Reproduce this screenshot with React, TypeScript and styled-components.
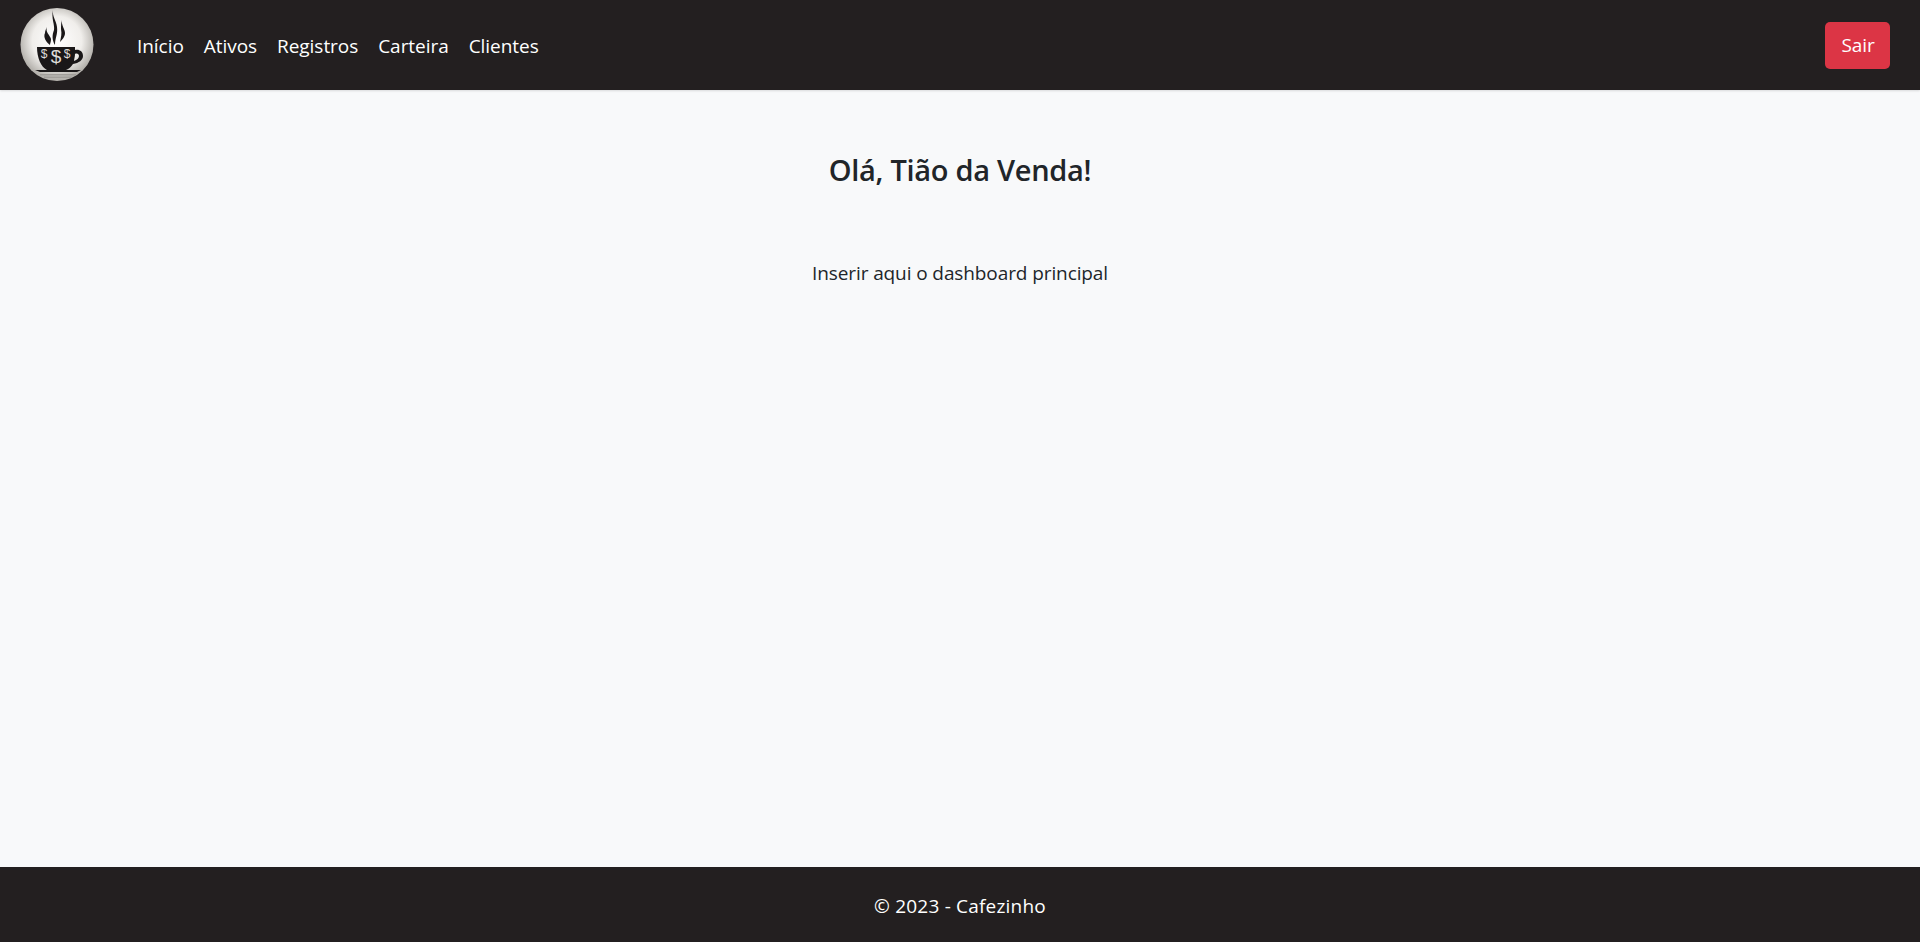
import styled, { createGlobalStyle } from "styled-components";

const GlobalStyle = createGlobalStyle`
  html, body {
    margin: 0;
    padding: 0;
    height: 100%;
  }
  body {
    font-family: "Open Sans", "Noto Sans", sans-serif;
    background: #f8f9fa;
    color: #212529;
  }
  #root {
    min-height: 100%;
  }
`

const Page = styled.div`
  display: flex;
  flex-direction: column;
  height: 942px;
`

const Header = styled.header`
  display: flex;
  align-items: center;
  justify-content: space-between;
  height: 90px;
  padding: 0 30px 0 20px;
  background: #231f20;
  box-shadow: 0 1px 2px rgba(0, 0, 0, 0.12);
`

const LeftSide = styled.div`
  display: flex;
  align-items: center;
  gap: 43px;
`

const Nav = styled.nav`
  display: flex;
  align-items: center;
  gap: 20px;
  padding-top: 1px;
`

const NavLink = styled.a`
  font-size: 19px;
  letter-spacing: -0.05px;
  color: #fff;
  text-decoration: none;
`

const LogoutButton = styled.button`
  width: 65px;
  height: 47px;
  padding: 0 0 0 1px;
  border: none;
  border-radius: 5px;
  background: #dc3545;
  color: #fff;
  font-family: inherit;
  font-size: 19px;
  letter-spacing: -0.12px;
`

const Main = styled.main`
  flex: 1;
  display: flex;
  flex-direction: column;
  align-items: center;
`

const Title = styled.h1`
  margin: 61px 0 0;
  font-size: 29px;
  line-height: 38px;
  font-weight: 600;
  letter-spacing: -0.3px;
`

const Subtitle = styled.p`
  margin: 70px 0 0;
  font-size: 19px;
  line-height: 28px;
  letter-spacing: -0.1px;
`

const Footer = styled.footer`
  display: flex;
  align-items: center;
  justify-content: center;
  height: 75px;
  padding-top: 2px;
  box-sizing: border-box;
  background: #231f20;
  color: #fff;
  font-size: 19px;
  letter-spacing: 0.2px;
`

function DollarSign({ x, y, size }: { x: number; y: number; size: number }) {
  return (
    <text
      x={x}
      y={y}
      fontSize={size}
      fontWeight="400"
      fontFamily="Liberation Sans, sans-serif"
      fill="#dedcd9"
      textAnchor="middle"
    >
      $
    </text>
  );
}

function Logo() {
  return (
    <svg width="74" height="74" viewBox="0 0 74 74" aria-hidden="true">
      <defs>
        <radialGradient id="logoBg" cx="50%" cy="45%" r="52%">
          <stop offset="0%" stopColor="#ffffff" />
          <stop offset="65%" stopColor="#f0eeeb" />
          <stop offset="100%" stopColor="#b5b2ad" />
        </radialGradient>
      </defs>
      <circle cx="37" cy="36.5" r="36.5" fill="url(#logoBg)" />
      <path d="M33 2c-1 6 3 10 4 17 1 7-2 11-2 18-3-5-3-10-1-15 1-5-3-12-1-20z" fill="#1a1718" />
      <path d="M27 19c-2 5 3 8 4 12 0 3-1 4-1 6-4-3-7-8-5-12 0-2 1-4 2-6z" fill="#1a1718" />
      <path d="M42 12c-1 5 3 9 3 13 0 4-3 7-5 9 1-5 2-8 1-13 0-3 0-6 1-9z" fill="#1a1718" />
      <path fillRule="evenodd" d="M17 39h38v3c4-1 8 1 8 6 0 4-4 7-10 8-2 3-4 5-7 6H27c-6-3-10-12-10-23zM55 46c0 3-1 5-1 7 3-1 5-3 5-5s-2-3-4-2z" fill="#1a1718" />
      <path d="M15 62h46l-4 2H20z" fill="#1a1718" />
      <rect x="20" y="66" width="36" height="1.5" fill="#a09d99" />
      <rect x="24" y="68.5" width="28" height="1.5" fill="#a09d99" />
      <DollarSign x={24} y={50} size={12} />
      <DollarSign x={36} y={55} size={19} />
      <DollarSign x={47} y={50} size={12} />
    </svg>
  );
}

export default function App() {
  return (
    <>
      <GlobalStyle />
      <Page>
        <Header>
          <LeftSide>
            <Logo />
            <Nav>
              <NavLink href="#">Início</NavLink>
              <NavLink href="#">Ativos</NavLink>
              <NavLink href="#">Registros</NavLink>
              <NavLink href="#">Carteira</NavLink>
              <NavLink href="#">Clientes</NavLink>
            </Nav>
          </LeftSide>
          <LogoutButton>Sair</LogoutButton>
        </Header>
        <Main>
          <Title>Olá, Tião da Venda!</Title>
          <Subtitle>Inserir aqui o dashboard principal</Subtitle>
        </Main>
        <Footer>© 2023 - Cafezinho</Footer>
      </Page>
    </>
  );
}
